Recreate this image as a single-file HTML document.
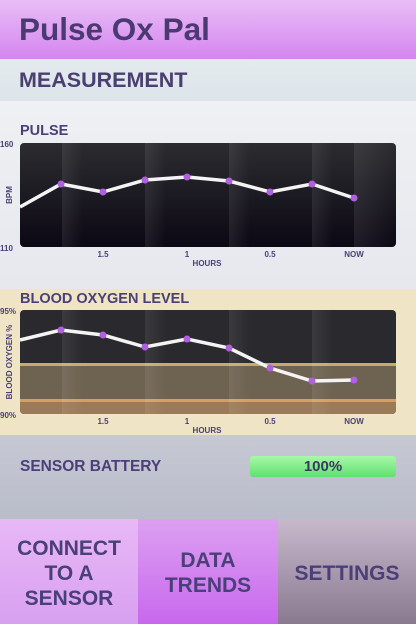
<!DOCTYPE html><html><head><style>
*{margin:0;padding:0;box-sizing:border-box}
body{width:416px;height:624px;overflow:hidden;font-family:"Liberation Sans",sans-serif;font-weight:bold;color:#4a3f78;background:#e8ecf0;position:relative}
.a{position:absolute}
</style></head><body>
<div class="a" style="left:0;top:0;width:416px;height:59px;background:linear-gradient(#e8bef6,#d585f0)"></div>
<div class="a" style="left:19px;top:11px;font-size:31.5px;color:#4a3a70">Pulse Ox Pal</div>
<div class="a" style="left:0;top:59px;width:416px;height:42px;background:linear-gradient(#e4eaee,#dde5ea)"></div>
<div class="a" style="left:19px;top:68px;font-size:21.5px;color:#4a3f70">MEASUREMENT</div>
<div class="a" style="left:0;top:101px;width:416px;height:188px;background:linear-gradient(#eef0f3,#e6e8ee)"></div>
<div class="a" style="left:20px;top:123px;font-size:14.5px">PULSE</div>
<div class="a" style="left:0;top:289px;width:416px;height:146px;background:#efe4c6"></div>
<div class="a" style="left:20px;top:291px;font-size:14.5px">BLOOD OXYGEN LEVEL</div>
<div class="a" style="left:0;top:435px;width:416px;height:84px;background:linear-gradient(#c6c9d4,#b9bcc9)"></div>
<svg class="a" style="left:0;top:0" width="416" height="624">
<defs>
<linearGradient id="g" x1="0" y1="0" x2="0" y2="1"><stop offset="0" stop-color="#2c2c30"/><stop offset="1" stop-color="#0c0814"/></linearGradient>
<linearGradient id="s" x1="0" y1="0" x2="1" y2="0"><stop offset="0" stop-color="#fff" stop-opacity=".08"/><stop offset="1" stop-color="#fff" stop-opacity="0"/></linearGradient>
</defs>
<rect x="20" y="143" width="376" height="104" rx="4" fill="url(#g)"/>
<g fill="url(#s)"><rect x="62" y="143" width="21" height="104"/><rect x="145" y="143" width="21" height="104"/><rect x="229" y="143" width="21" height="104"/><rect x="312" y="143" width="21" height="104"/><rect x="354" y="143" width="42" height="104"/></g>
<polyline points="20,207 61,184 103,192 145,180 187,177 229,181 270,192 312,184 354,198" fill="none" stroke="#f4f4f4" stroke-width="3.5"/>
<g fill="#b060e0"><circle cx="61" cy="184" r="3.5"/><circle cx="103" cy="192" r="3.5"/><circle cx="145" cy="180" r="3.5"/><circle cx="187" cy="177" r="3.5"/><circle cx="229" cy="181" r="3.5"/><circle cx="270" cy="192" r="3.5"/><circle cx="312" cy="184" r="3.5"/><circle cx="354" cy="198" r="3.5"/></g>
<rect x="20" y="310" width="376" height="104" rx="4" fill="#2a2a2e"/>
<rect x="20" y="363" width="376" height="3" fill="#c8aa70"/>
<rect x="20" y="366" width="376" height="33" fill="#6e6250"/>
<rect x="20" y="399" width="376" height="3" fill="#d4a060"/>
<path d="M20 402h376v8a4 4 0 0 1-4 4H24a4 4 0 0 1-4-4z" fill="#9a7a58"/>
<g fill="url(#s)"><rect x="62" y="310" width="21" height="104"/><rect x="145" y="310" width="21" height="104"/><rect x="229" y="310" width="21" height="104"/><rect x="312" y="310" width="21" height="104"/></g>
<polyline points="20,340 61,330 103,335 145,347 187,339 229,348 270,368 312,381 354,380" fill="none" stroke="#f4f4f4" stroke-width="3.5"/>
<g fill="#b060e0"><circle cx="61" cy="330" r="3.5"/><circle cx="103" cy="335" r="3.5"/><circle cx="145" cy="347" r="3.5"/><circle cx="187" cy="339" r="3.5"/><circle cx="229" cy="348" r="3.5"/><circle cx="270" cy="368" r="3.5"/><circle cx="312" cy="381" r="3.5"/><circle cx="354" cy="380" r="3.5"/></g>
<g font-family="Liberation Sans" font-weight="bold" font-size="8" fill="#4a3f78">
<text x="0" y="147">160</text><text x="0" y="251">110</text>
<text x="12" y="195" transform="rotate(-90 12 195)" text-anchor="middle">BPM</text>
<text x="103" y="257" text-anchor="middle">1.5</text><text x="187" y="257" text-anchor="middle">1</text><text x="270" y="257" text-anchor="middle">0.5</text><text x="354" y="257" text-anchor="middle">NOW</text>
<text x="207" y="266" text-anchor="middle">HOURS</text>
<text x="0" y="314">95%</text><text x="0" y="418">90%</text>
<text x="12" y="362" transform="rotate(-90 12 362)" text-anchor="middle">BLOOD OXYGEN %</text>
<text x="103" y="424" text-anchor="middle">1.5</text><text x="187" y="424" text-anchor="middle">1</text><text x="270" y="424" text-anchor="middle">0.5</text><text x="354" y="424" text-anchor="middle">NOW</text>
<text x="207" y="433" text-anchor="middle">HOURS</text>
</g>
</svg>
<div class="a" style="left:20px;top:458px;font-size:15.5px">SENSOR BATTERY</div>
<div class="a" style="left:250px;top:456px;width:146px;height:21px;border-radius:3px;background:linear-gradient(#a8f8a8,#60e070);font-size:15px;text-align:center;line-height:21px;color:#3a3a60">100%</div>
<div class="a" style="left:0;top:519px;width:138px;height:105px;background:linear-gradient(#e8b8f6,#d8a0f0);font-size:21px;text-align:center;line-height:25px;padding-top:17px">CONNECT<br>TO A<br>SENSOR</div>
<div class="a" style="left:138px;top:519px;width:140px;height:105px;background:linear-gradient(#dca0f0,#c868ee);font-size:21px;text-align:center;line-height:25px;padding-top:29px">DATA<br>TRENDS</div>
<div class="a" style="left:278px;top:519px;width:138px;height:105px;background:linear-gradient(#c8b8cc,#8a7a90);font-size:21px;text-align:center;line-height:25px;padding-top:42px">SETTINGS</div>
</body></html>
